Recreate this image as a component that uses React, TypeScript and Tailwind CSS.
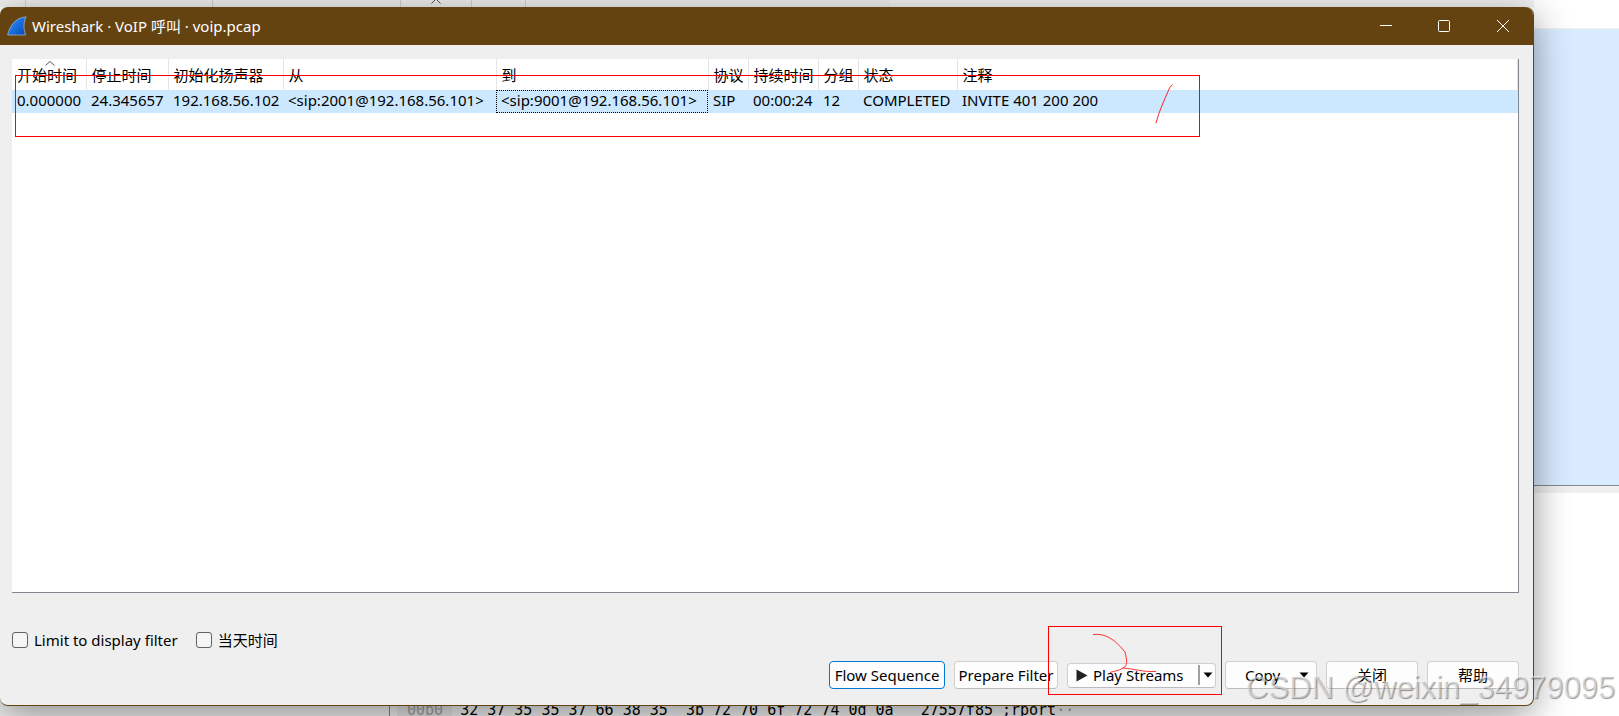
import { useState } from "react";

interface Column {
  title: string;
  value: string;
  width: string;
}

const COLUMNS: Column[] = [
  { title: "开始时间", value: "0.000000", width: "w-[74px]" },
  { title: "停止时间", value: "24.345657", width: "w-[82px]" },
  { title: "初始化扬声器", value: "192.168.56.102", width: "w-[115px]" },
  { title: "从", value: "<sip:2001@192.168.56.101>", width: "w-[213px]" },
  { title: "到", value: "<sip:9001@192.168.56.101>", width: "w-[212px]" },
  { title: "协议", value: "SIP", width: "w-[40px]" },
  { title: "持续时间", value: "00:00:24", width: "w-[70px]" },
  { title: "分组", value: "12", width: "w-[40px]" },
  { title: "状态", value: "COMPLETED", width: "w-[99px]" },
  { title: "注释", value: "INVITE 401 200 200", width: "" },
];

const FOCUSED_COLUMN = 4;

const BUTTON =
  "h-7 rounded-[4px] border border-[#d0d0d0] border-b-[#bcbcbc] bg-[#fdfdfd] whitespace-nowrap";

function SharkFin() {
  return (
    <svg width="20" height="20" viewBox="0 0 20 20" aria-hidden="true">
      <defs>
        <linearGradient id="fin" x1="0" y1="0" x2="1" y2="1">
          <stop offset="0" stopColor="#3b93f5" />
          <stop offset="0.5" stopColor="#1a6fe0" />
          <stop offset="1" stopColor="#0646a8" />
        </linearGradient>
      </defs>
      <path
        d="M.6 19 C3 9.500 8 2 19 .8 C16.500 6 16.300 13 18.600 19 Z"
        fill="url(#fin)"
        stroke="#9db4c9"
        strokeWidth="0.800"
      />
    </svg>
  );
}

function BackgroundWindow() {
  return (
    <div className="absolute inset-0 flex flex-col bg-white" aria-hidden="true">
      <div className="flex h-7 shrink-0">
        <div className="flex h-[7px] w-[55%] bg-[#f0f0f0]">
          <div className="w-[26px] border-r border-[#d0d0d0]" />
          <div className="w-[187px] border-r border-[#d0d0d0]" />
          <div className="w-[188px] border-r border-[#d0d0d0]" />
          <div className="flex w-[71px] justify-center border-r border-[#d0d0d0]">
            <svg width="10" height="5" viewBox="0 0 10 5" fill="none" stroke="#555">
              <path d="M0.500 3.500 L5 -1 L9.500 3.500" />
            </svg>
          </div>
          <div className="w-[54px] border-r border-[#d0d0d0]" />
        </div>
        <div className="h-[7px] flex-1 bg-[#f3f3f3]" />
        <div className="w-[85px] bg-white" />
      </div>
      <div className="flex-1 border-t border-b border-t-[#f0f0f0] border-b-[#828790] bg-[#d9ecff]" />
      <div className="h-[7px] shrink-0 bg-[#f0f0f0]" />
      <div className="flex h-[223px] shrink-0 items-end">
        <div className="h-full w-[390px] border-r border-[#828790] bg-[#f0f0f0]" />
        <div className="flex h-full flex-1 items-end bg-linear-to-r from-[#f0f0f0] from-85% to-white to-92%">
          <div className="flex h-3 items-center font-['DejaVu_Sans_Mono',monospace] text-[15px] whitespace-pre">
            <span className="ml-[7px] bg-[#e4e4e4] pr-[9px] pl-[10px] text-[#a0a0a0]">00b0</span>
            <span className="pl-2">
              {"32 37 35 35 37 66 38 35  3b 72 70 6f 72 74 0d 0a   27557f85 ;rport"}
            </span>
            <span className="text-[#999]">··</span>
          </div>
        </div>
      </div>
    </div>
  );
}

function TitleBar() {
  return (
    <header className="flex h-[38px] items-center bg-[#654311] pl-[7px] text-white">
      <SharkFin />
      <h1 className="ml-[5px] flex-1">Wireshark · VoIP 呼叫 · voip.pcap</h1>
      <button className="flex h-full w-[58px] items-center justify-center" aria-label="Minimize">
        <svg width="12" height="12" viewBox="0 0 12 12" stroke="#fff">
          <path d="M0 5.500 H12" />
        </svg>
      </button>
      <button className="flex h-full w-[58px] items-center justify-center" aria-label="Maximize">
        <svg width="12" height="12" viewBox="0 0 12 12" fill="none" stroke="#fff">
          <rect x="0.500" y="0.500" width="11" height="11" rx="1" />
        </svg>
      </button>
      <button className="flex h-full w-[60px] items-center justify-center" aria-label="Close">
        <svg width="12" height="12" viewBox="0 0 12 12" stroke="#fff">
          <path d="M0 0 L12 12 M12 0 L0 12" />
        </svg>
      </button>
    </header>
  );
}

function CallTable() {
  return (
    <div className="flex-1 border-r border-b border-[#828790] bg-white">
      <table className="w-full table-fixed border-collapse text-left whitespace-nowrap">
        <thead>
          <tr className="h-[31px]">
            {COLUMNS.map((col, i) => (
              <th
                key={col.title}
                className={`${col.width} relative border-r border-[#e5e5e5] pl-[5px] font-normal`}
              >
                {i === 0 && (
                  <svg
                    className="absolute top-[2px] left-[33px]"
                    width="10"
                    height="5"
                    viewBox="0 0 10 5"
                    fill="none"
                    stroke="#555"
                  >
                    <path d="M0.500 4.500 L5 0.500 L9.500 4.500" />
                  </svg>
                )}
                {col.title}
              </th>
            ))}
          </tr>
        </thead>
        <tbody>
          <tr className="h-[23px] bg-[#cce8ff] leading-[19px]">
            {COLUMNS.map((col, i) => (
              <td
                key={col.title}
                className={
                  i === FOCUSED_COLUMN
                    ? "pb-[3px] pl-[5px] outline-1 -outline-offset-1 outline-black outline-dotted"
                    : "pb-[3px] pl-[5px]"
                }
              >
                {col.value}
              </td>
            ))}
          </tr>
        </tbody>
      </table>
    </div>
  );
}

interface CheckProps {
  label: string;
  checked: boolean;
  onChange: (checked: boolean) => void;
}

function Check({ label, checked, onChange }: CheckProps) {
  return (
    <label className="flex items-center gap-[6px]">
      <input
        type="checkbox"
        checked={checked}
        onChange={(e) => onChange(e.target.checked)}
        className="size-4 appearance-none rounded-[3px] border border-[#626262] bg-[#f5f5f5] checked:bg-[#0067c0]"
      />
      {label}
    </label>
  );
}

function DownArrow() {
  return (
    <svg width="10" height="6" viewBox="0 0 10 6" aria-hidden="true">
      <path d="M0.500 0.500 H9.500 L5 5.500 Z" fill="#000" />
    </svg>
  );
}

function ButtonRow() {
  return (
    <div className="flex items-center justify-end gap-[9px]">
      <button className="h-7 w-[116px] rounded-[4px] border border-[#0078d4] bg-[#fdfdfd] whitespace-nowrap">
        Flow Sequence
      </button>
      <button className={`${BUTTON} w-[104px]`}>Prepare Filter</button>
      <div className="flex h-[25px] w-[149px] items-center rounded-[4px] border border-[#d0d0d0] border-b-[#bcbcbc] bg-[#fdfdfd]">
        <button className="flex flex-1 items-center gap-[5px] pl-2 whitespace-nowrap">
          <svg width="12" height="13" viewBox="0 0 12 13" aria-hidden="true">
            <path d="M0.500 0.500 L11.500 6.500 L0.500 12.500 Z" fill="#222" />
          </svg>
          Play Streams
        </button>
        <button
          className="flex h-5 w-[17px] items-center justify-center border-l-2 border-[#a0a0a0]"
          aria-label="Play options"
        >
          <DownArrow />
        </button>
      </div>
      <button className={`${BUTTON} flex w-[92px] items-center justify-between pr-[7px] pl-[19px]`}>
        Copy
        <DownArrow />
      </button>
      <button className={`${BUTTON} w-[92px]`}>关闭</button>
      <button className={`${BUTTON} w-[92px]`}>帮助</button>
    </div>
  );
}

// Hand-drawn red marks lying over the dialog
function Annotations() {
  return (
    <div className="pointer-events-none absolute inset-0" aria-hidden="true">
      <div className="absolute top-[75px] left-[15px] h-[62px] w-[1185px] border border-[#f00]" />
      <svg
        className="absolute top-[84px] left-[1154px]"
        width="20"
        height="42"
        viewBox="0 0 20 42"
        fill="none"
        stroke="#f22"
      >
        <path d="M18.500 0.500 L15.500 4 C10 17 5 27 2 39" />
      </svg>
      <div className="absolute right-[397px] bottom-[21px] h-[69px] w-[174px] border border-[#f00]">
        <svg
          className="absolute top-[6px] left-[43px]"
          width="68"
          height="44"
          viewBox="0 0 68 44"
          fill="none"
          stroke="#f33"
        >
          <path d="M1 1.500 C15 0 24 8 33 19 C35 27 36 33 31 35 C27 38 22 38 18 39.500 M31 35 C43 36 50 39 64 38.500" />
        </svg>
      </div>
      <div className="absolute right-1 bottom-[10px] font-['Liberation_Sans',sans-serif] text-[31px] leading-9 whitespace-nowrap text-white/50 [text-shadow:1px_1px_1px_rgba(0,0,0,0.4)]">
        CSDN @weixin_34979095
      </div>
    </div>
  );
}

export default function App() {
  const [limitToFilter, setLimitToFilter] = useState(false);
  const [timeOfDay, setTimeOfDay] = useState(false);

  return (
    <div className="relative flex min-h-screen flex-col overflow-hidden font-['Noto_Sans','Noto_Sans_CJK_SC',sans-serif] text-[15px] leading-5 text-black">
      <BackgroundWindow />
      <main className="relative mt-[7px] mr-[85px] mb-[10px] flex flex-1 flex-col rounded-[8px] border-r border-b border-[#654311] bg-[#efefef] shadow-[0_8px_36px_rgba(0,0,0,0.42)]">
        <div className="overflow-hidden rounded-t-[8px]">
          <TitleBar />
        </div>
        <div className="flex flex-1 flex-col pt-[14px] pr-[14px] pb-4 pl-3">
          <CallTable />
          <div className="mt-[37px] flex gap-[18px]">
            <Check label="Limit to display filter" checked={limitToFilter} onChange={setLimitToFilter} />
            <Check label="当天时间" checked={timeOfDay} onChange={setTimeOfDay} />
          </div>
          <div className="mt-[11px]">
            <ButtonRow />
          </div>
        </div>
      </main>
      <Annotations />
    </div>
  );
}
